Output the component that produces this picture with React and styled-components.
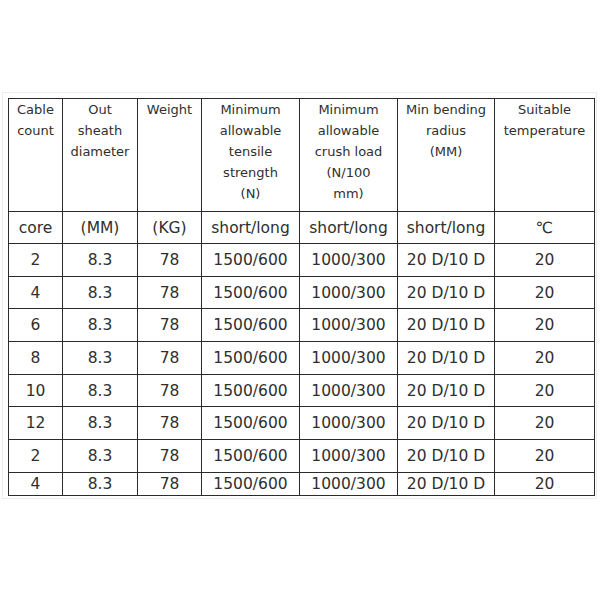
import React from 'react';
import styled, { createGlobalStyle } from 'styled-components';

const GlobalStyle = createGlobalStyle`
  html, body {
    margin: 0;
    padding: 0;
    background: #fff;
  }
  body {
    font-family: "DejaVu Sans", Verdana, sans-serif;
    color: #2f2f2f;
  }
`;

const Page = styled.div`
  width: 600px;
  height: 600px;
  padding: 92px 3px 0 2px;
  box-sizing: border-box;
`;

const Frame = styled.div`
  border: 1px solid #ececec;
  padding: 5px 2px 2px 5px;
  width: 595px;
  box-sizing: border-box;
`;

const Table = styled.table`
  border-collapse: collapse;
  table-layout: fixed;
  width: 587px;
`;

const HeadCell = styled.td`
  border: 1px solid #2b2b2b;
  font-size: 13px;
  line-height: 21px;
  text-align: center;
  vertical-align: top;
  padding: 0;
  height: 113px;
  box-sizing: border-box;
`;

const Cell = styled.td`
  border: 1px solid #2b2b2b;
  font-size: 15.5px;
  text-align: center;
  vertical-align: middle;
  padding: 0;
  height: ${(p) => p.$h}px;
  white-space: nowrap;
`;

const widths = [54, 75, 64, 98, 98, 97, 100];

const headers = [
  ['Cable', 'count'],
  ['Out', 'sheath', 'diameter'],
  ['Weight'],
  ['Minimum', 'allowable', 'tensile', 'strength', '(N)'],
  ['Minimum', 'allowable', 'crush load', '(N/100', 'mm)'],
  ['Min bending', 'radius', '(MM)'],
  ['Suitable', 'temperature'],
];

const units = ['core', '(MM)', '(KG)', 'short/long', 'short/long', 'short/long', '\u2103'];

const cores = [2, 4, 6, 8, 10, 12, 2, 4];
const values = ['8.3', '78', '1500/600', '1000/300', '20 D/10 D', '20'];

export default function App() {
  return (
    <>
      <GlobalStyle />
      <Page>
        <Frame>
          <Table>
            <colgroup>
              {widths.map((w, i) => (
                <col key={i} style={{ width: w }} />
              ))}
            </colgroup>
            <tbody>
              <tr>
                {headers.map((lines, i) => (
                  <HeadCell key={i}>
                    {lines.map((l, j) => (
                      <div key={j}>{l}</div>
                    ))}
                  </HeadCell>
                ))}
              </tr>
              <tr>
                {units.map((u, i) => (
                  <Cell key={i} $h={31}>{u}</Cell>
                ))}
              </tr>
              {cores.map((c, i) => {
                const h = i === cores.length - 1 ? 22 : 31.7;
                return (
                  <tr key={i}>
                    <Cell $h={h}>{c}</Cell>
                    {values.map((v, j) => (
                      <Cell key={j} $h={h}>{v}</Cell>
                    ))}
                  </tr>
                );
              })}
            </tbody>
          </Table>
        </Frame>
      </Page>
    </>
  );
}
